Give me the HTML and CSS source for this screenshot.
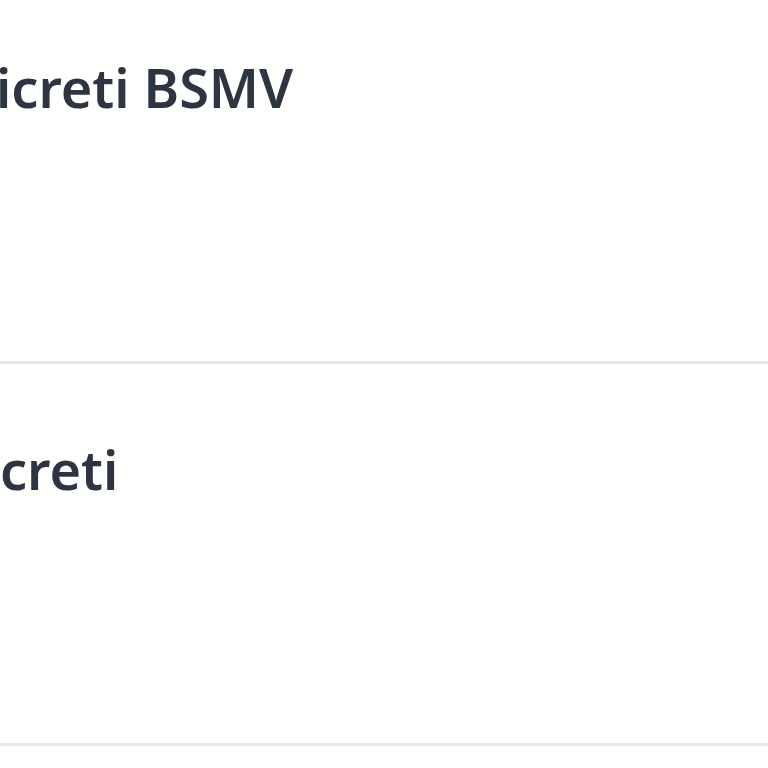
FILE: index.html
```html
<!DOCTYPE html>
<html lang="it">
<head>
<meta charset="utf-8">
<title>Decreti</title>
<link rel="stylesheet" href="styles.css">
</head>
<body>
<div class="list">
  <div class="row"><h2 class="title shift">icreti BSMV</h2></div>
  <div class="row"><h2 class="title">creti</h2></div>
</div>
</body>
</html>
```
FILE: styles.css
```css
html, body {
  margin: 0;
  padding: 0;
  background: #fffffd;
  overflow: hidden;
}
.list {
  margin-top: -18px;
  display: flex;
  flex-direction: column;
}
.row {
  border-bottom: 3px solid #e2e8f0;
  padding-top: 73px;
  box-sizing: content-box;
  height: 306px;
  overflow: hidden;
}
.title {
  margin: 0;
  font-family: "Noto Sans", "Open Sans", sans-serif;
  font-weight: 600;
  font-size: 54px;
  line-height: 64px;
  color: #2d3542;
  white-space: nowrap;
}
.shift {
  margin-left: -4px;
}
```
